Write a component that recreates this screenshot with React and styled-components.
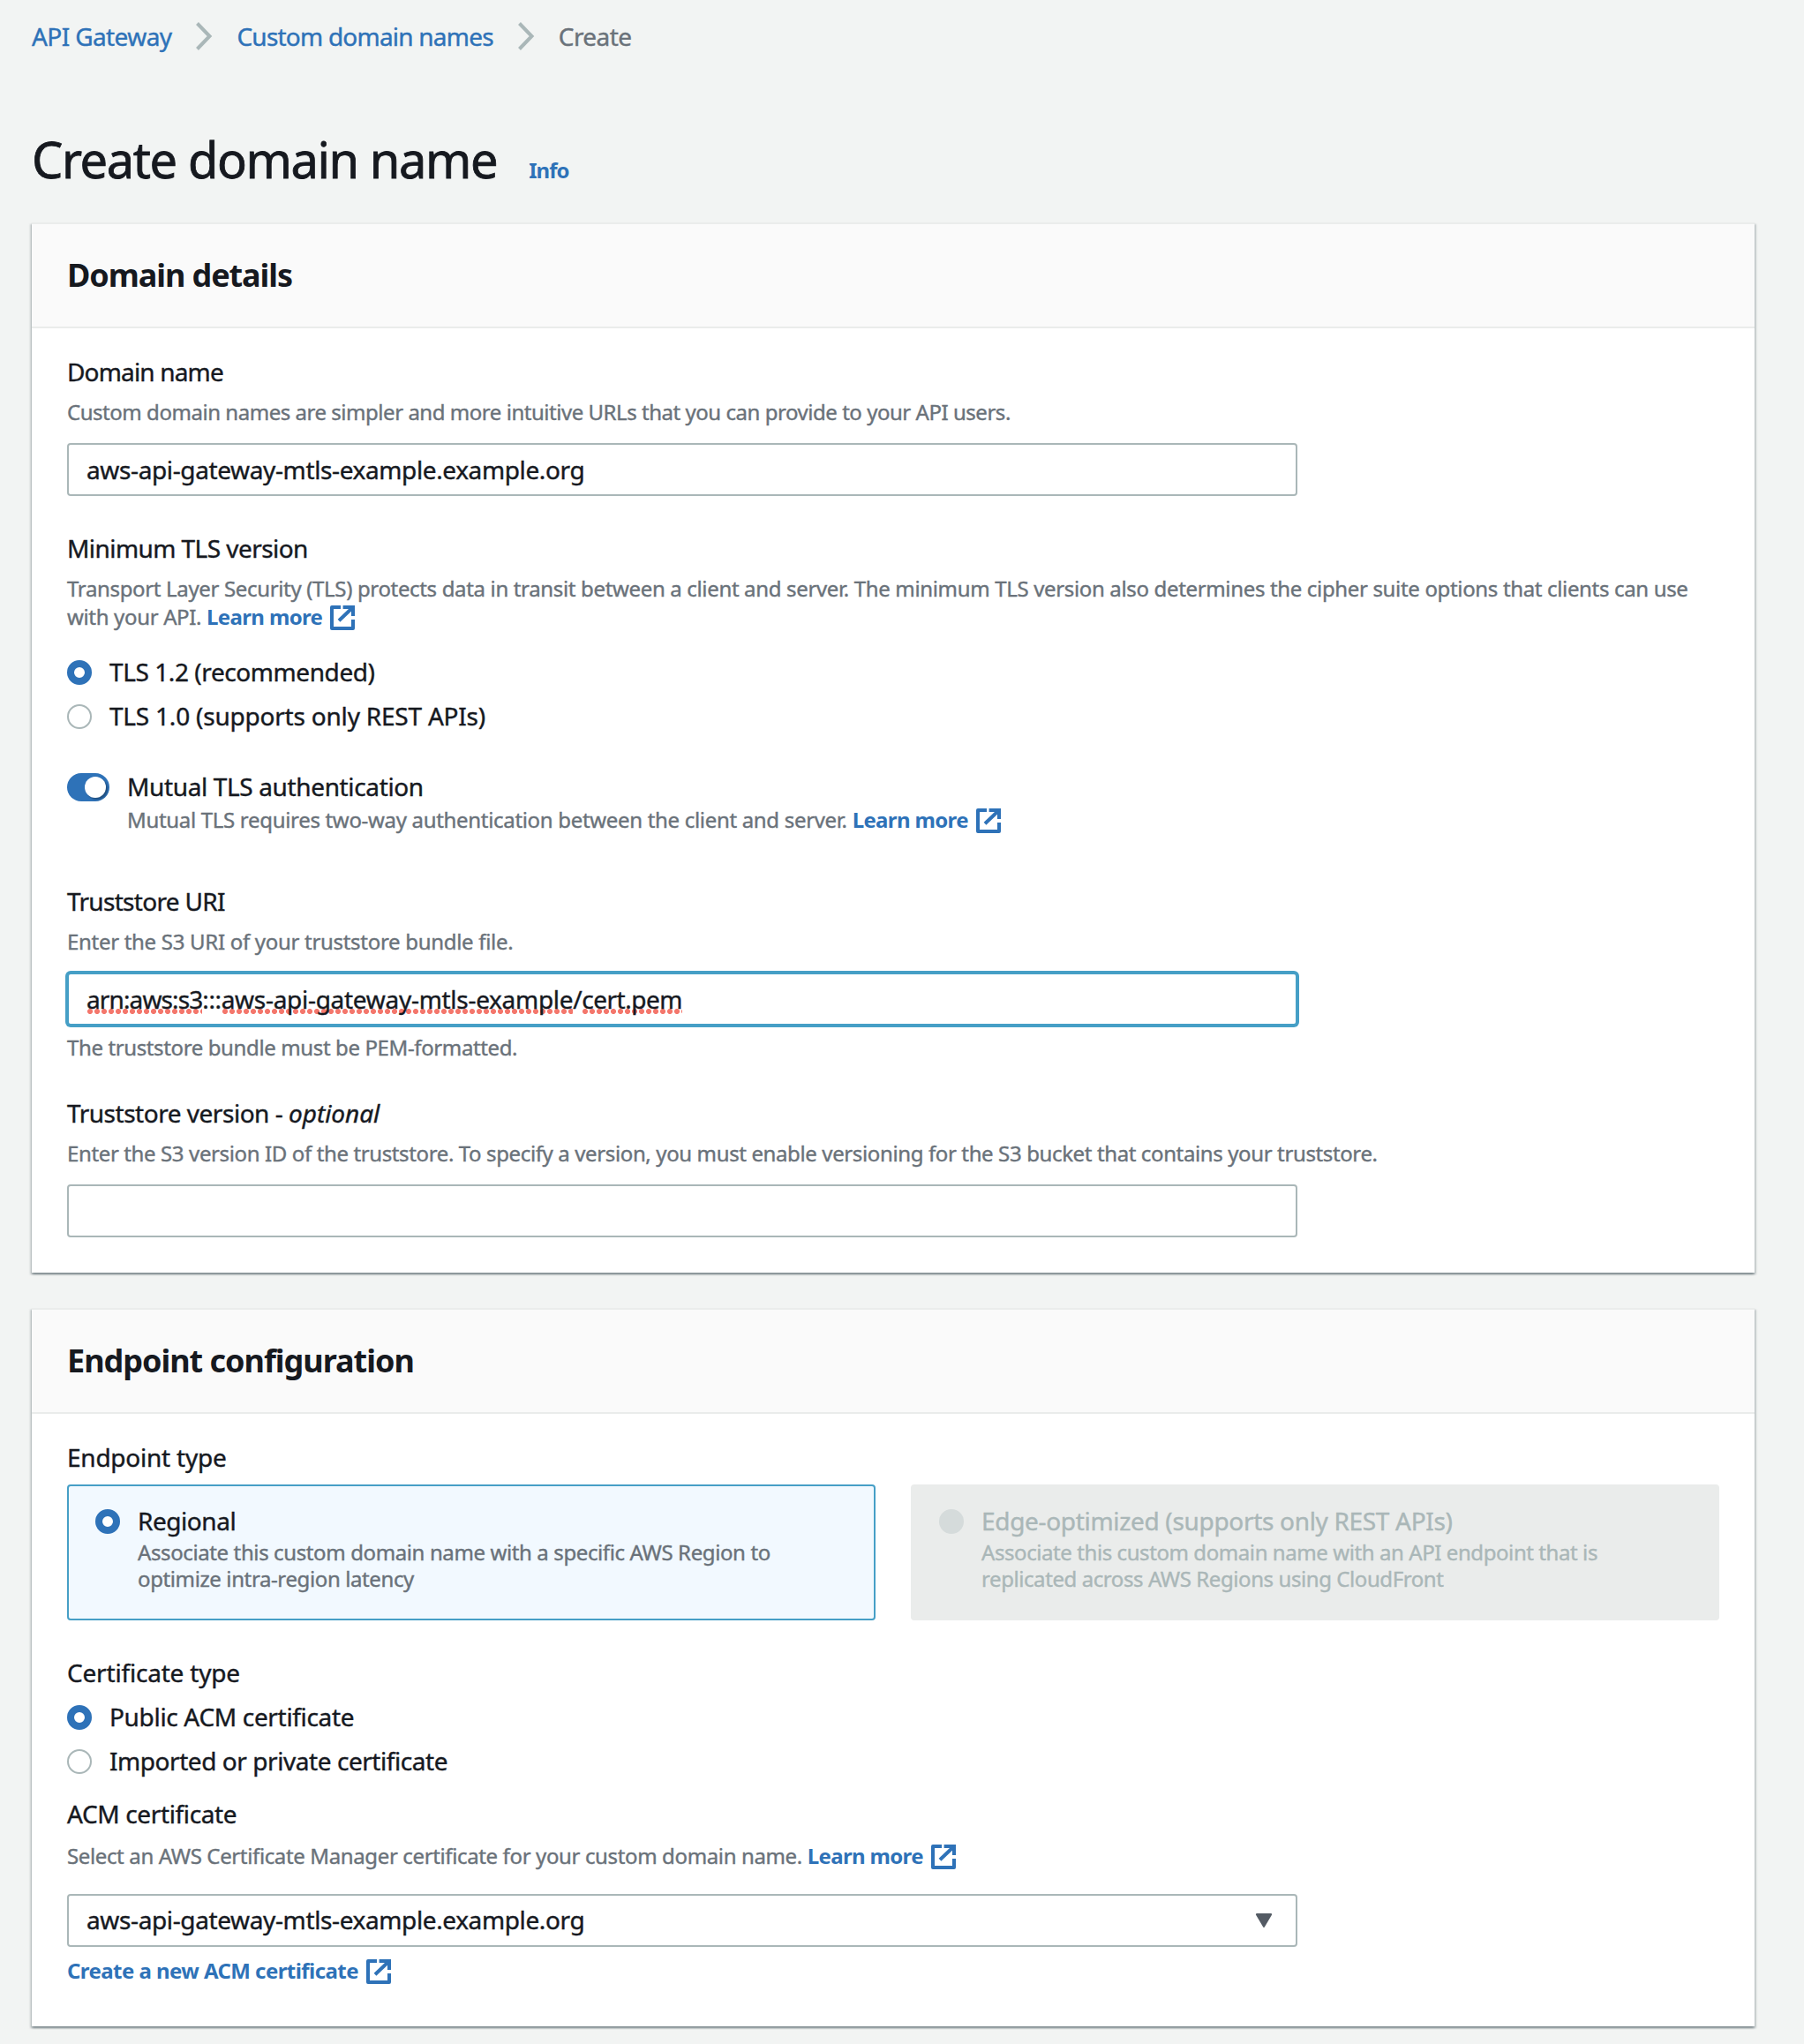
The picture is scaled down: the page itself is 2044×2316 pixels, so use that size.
import React from "react";
import styled, { createGlobalStyle, css } from "styled-components";

const color = {
  page: "#f2f4f3",
  text: "#16191f",
  muted: "#6a727a",
  link: "#2e72b8",
  border: "#aab7b8",
  focus: "#469fc6",
  divider: "#eaeceb",
  disabled: "#aab7b8",
};

const GlobalStyle = createGlobalStyle`
  *, *::before, *::after { box-sizing: border-box; }
  body {
    margin: 0;
    background: ${color.page};
    color: ${color.text};
    font-family: "Noto Sans", "Open Sans", sans-serif;
    font-size: 28px;
    font-weight: 400;
    -webkit-text-stroke: 0.4px currentColor;
  }
  h1, h2, p { margin: 0; }
`;

const tracking = css`
  letter-spacing: ${(p) => p.$track ?? 0}px;
`;

const Page = styled.main`
  min-height: 2316px;
  padding: 19px 56px 20px 36px;
`;

const Breadcrumbs = styled.nav`
  display: flex;
  align-items: center;
  gap: 27px;
  height: 44px;
  line-height: 44px;
`;

const Crumb = styled.span`
  color: ${(p) => (p.$current ? color.muted : color.link)};
  white-space: nowrap;
  ${tracking}
`;

const TitleRow = styled.header`
  display: flex;
  align-items: baseline;
  gap: 36px;
  margin: 79px 0 34px;
`;

const Title = styled.h1`
  font-size: 56px;
  font-weight: 400;
  line-height: 76px;
  white-space: nowrap;
  -webkit-text-stroke-width: 0.8px;
  ${tracking}
`;

const Link = styled.a`
  color: ${color.link};
  font-size: 24px;
  font-weight: 700;
  white-space: nowrap;
  -webkit-text-stroke-width: 0;
  ${tracking}
`;

const Card = styled.section`
  background: #fff;
  border-top: 2px solid ${color.divider};
  box-shadow: 0 2px 2px rgba(0, 28, 36, 0.3), 2px 2px 2px rgba(0, 28, 36, 0.15),
    -2px 2px 2px rgba(0, 28, 36, 0.15);
  & + & {
    margin-top: 40px;
  }
`;

const CardHeader = styled.div`
  height: 118px;
  padding: 33px 40px 0;
  background: #fafafa;
  border-bottom: 2px solid ${color.divider};
`;

const CardTitle = styled.h2`
  font-size: 36px;
  font-weight: 700;
  line-height: 49px;
  -webkit-text-stroke-width: 0;
  ${tracking}
`;

const CardBody = styled.div`
  padding: 27px 40px ${(p) => p.$bottom}px;
`;

const Field = styled.div`
  margin-top: ${(p) => p.$top ?? 0}px;
`;

const Label = styled.div`
  line-height: 44px;
  white-space: nowrap;
  ${tracking}
`;

const Optional = styled.em`
  ${tracking}
`;

const Description = styled.p`
  margin-top: ${(p) => p.$top ?? 8}px;
  color: ${color.muted};
  font-size: 24px;
  line-height: 32px;
  ${tracking}
`;

const Control = styled.div`
  display: flex;
  align-items: center;
  justify-content: space-between;
  width: 1394px;
  height: 60px;
  margin-top: ${(p) => p.$top ?? 19}px;
  padding: 0 26px 0 20px;
  background: #fff;
  border: 2px solid ${(p) => (p.$focused ? color.focus : color.border)};
  border-radius: 4px;
  box-shadow: ${(p) => (p.$focused ? `0 0 0 2px ${color.focus}` : "none")};
  line-height: 44px;
  white-space: nowrap;
`;

const Value = styled.span`
  ${tracking}
`;

const SelectedOption = styled.span`
  padding-bottom: 2px;
  ${tracking}
`;

const Misspelled = styled.span`
  background: radial-gradient(circle, #f4776c 2.7px, transparent 3.3px) 0 calc(100% - 2px) / 8px 6px
    repeat-x;
  ${tracking}
`;

const Options = styled.div`
  margin-top: ${(p) => p.$top}px;
`;

const Option = styled.label`
  display: flex;
  gap: 20px;
  height: 50px;
  line-height: 44px;
`;

const OptionText = styled.span`
  ${tracking}
`;

const Radio = styled.span`
  flex: none;
  width: 28px;
  height: 28px;
  margin-top: ${(p) => p.$top ?? 9}px;
  border-radius: 50%;
  background: #fff;
  border: ${(p) =>
    p.$state === "checked"
      ? `8px solid ${color.link}`
      : p.$state === "disabled"
      ? "14px solid #d5dbdb"
      : `2px solid ${color.border}`};
`;

const ToggleRow = styled.div`
  display: flex;
  gap: 20px;
  margin-top: 30px;
`;

const Toggle = styled.span`
  display: flex;
  flex: none;
  justify-content: flex-end;
  align-items: center;
  width: 48px;
  height: 32px;
  margin-top: 7px;
  padding-right: 4px;
  border-radius: 16px;
  background: ${color.link};
`;

const Knob = styled.span`
  width: 24px;
  height: 24px;
  border-radius: 50%;
  background: #fff;
  box-shadow: 2px 2px 2px rgba(0, 0, 0, 0.3);
`;

const Tiles = styled.div`
  display: grid;
  grid-template-columns: 1fr 1fr;
  gap: 40px;
  margin-top: 9px;
`;

const Tile = styled.div`
  display: flex;
  gap: 20px;
  height: 154px;
  padding: 18px 30px 0;
  border: 2px solid ${(p) => (p.$disabled ? color.divider : color.focus)};
  border-radius: 4px;
  background: ${(p) => (p.$disabled ? color.divider : "#f2f9ff")};
  color: ${(p) => (p.$disabled ? color.disabled : color.text)};
`;

const TileTitle = styled.div`
  line-height: 42px;
  ${tracking}
`;

const TileText = styled.p`
  color: ${(p) => (p.$disabled ? color.disabled : color.muted)};
  font-size: 24px;
  line-height: 30px;
  ${tracking}
`;

const Icon = styled.svg`
  flex: none;
  display: block;
`;

const InlineIcon = styled.svg`
  margin-left: 9px;
  vertical-align: -6px;
`;

function Chevron() {
  return (
    <Icon width="20" height="32" viewBox="0 0 20 32" fill="none" stroke={color.border} strokeWidth="4">
      <path d="M2.5 1.5 16.5 16 2.5 30.5" />
    </Icon>
  );
}

function ExternalIcon() {
  return (
    <InlineIcon width="28" height="28" viewBox="1 1 14 14" fill="none" stroke={color.link} strokeWidth="2">
      <path d="M14 9v5H2V2h5" strokeLinejoin="round" />
      <path d="M8.3 2H14v5" />
      <path d="M6 9.6 13.6 2.4" />
    </InlineIcon>
  );
}

function Caret() {
  return (
    <Icon width="20" height="16" viewBox="0 0 20 16">
      <path
        d="M2 1.2h16L10 14.8z"
        fill="#545b64"
        stroke="#545b64"
        strokeWidth="2.2"
        strokeLinejoin="round"
      />
    </Icon>
  );
}

function ExternalLink({ children, track }) {
  return (
    <Link>
      <Value $track={track}>{children}</Value>
      <ExternalIcon />
    </Link>
  );
}

function RadioOption({ checked, track, children }) {
  return (
    <Option>
      <Radio $state={checked ? "checked" : "empty"} />
      <OptionText $track={track}>{children}</OptionText>
    </Option>
  );
}

export default function App() {
  return (
    <>
      <GlobalStyle />
      <Page>
        <Breadcrumbs>
          <Crumb $track={-0.6}>API Gateway</Crumb>
          <Chevron />
          <Crumb $track={-0.78}>Custom domain names</Crumb>
          <Chevron />
          <Crumb $current $track={-0.57}>Create</Crumb>
        </Breadcrumbs>

        <TitleRow>
          <Title $track={-1.4}>Create domain name</Title>
          <Link $track={-1}>Info</Link>
        </TitleRow>

        <Card>
          <CardHeader>
            <CardTitle $track={-1.08}>Domain details</CardTitle>
          </CardHeader>
          <CardBody $bottom={40}>
            <Field>
              <Label $track={-0.83}>Domain name</Label>
              <Description $track={-0.465}>
                Custom domain names are simpler and more intuitive URLs that you can provide to your API users.
              </Description>
              <Control>
                <Value $track={-0.375}>aws-api-gateway-mtls-example.example.org</Value>
              </Control>
            </Field>

            <Field $top={37}>
              <Label $track={-0.56}>Minimum TLS version</Label>
              <Description $track={-0.341}>
                Transport Layer Security (TLS) protects data in transit between a client and server. The minimum TLS
                version also determines the cipher suite options that clients can use with your API.{" "}
                <ExternalLink track={-0.65}>Learn more</ExternalLink>
              </Description>
              <Options $top={24}>
                <RadioOption checked track={-0.42}>TLS 1.2 (recommended)</RadioOption>
                <RadioOption track={-0.21}>TLS 1.0 (supports only REST APIs)</RadioOption>
              </Options>
            </Field>

            <ToggleRow>
              <Toggle>
                <Knob />
              </Toggle>
              <div>
                <Label $track={-0.36}>Mutual TLS authentication</Label>
                <Description $top={0} $track={-0.315}>
                  Mutual TLS requires two-way authentication between the client and server.{" "}
                  <ExternalLink track={-0.65}>Learn more</ExternalLink>
                </Description>
              </div>
            </ToggleRow>

            <Field $top={54}>
              <Label $track={-0.7}>Truststore URI</Label>
              <Description $track={-0.3}>Enter the S3 URI of your truststore bundle file.</Description>
              <Control $focused>
                <Value $track={-0.391}>
                  <Misspelled $track={-0.88}>arn:aws:s3</Misspelled>:::
                  <Misspelled $track={-0.29}>aws-api-gateway-mtls-example</Misspelled>/
                  <Misspelled $track={-0.5}>cert.pem</Misspelled>
                </Value>
              </Control>
              <Description $top={9} $track={-0.378}>The truststore bundle must be PEM-formatted.</Description>
            </Field>

            <Field $top={36}>
              <Label $track={-0.48}>
                Truststore version - <Optional $track={-0.064}>optional</Optional>
              </Label>
              <Description $track={-0.375}>
                Enter the S3 version ID of the truststore. To specify a version, you must enable versioning for the S3
                bucket that contains your truststore.
              </Description>
              <Control />
            </Field>
          </CardBody>
        </Card>

        <Card>
          <CardHeader>
            <CardTitle $track={-1.02}>Endpoint configuration</CardTitle>
          </CardHeader>
          <CardBody $bottom={47}>
            <Field>
              <Label $track={-0.24}>Endpoint type</Label>
              <Tiles>
                <Tile>
                  <Radio $state="checked" $top={8} />
                  <div>
                    <TileTitle $track={-0.45}>Regional</TileTitle>
                    <TileText $track={-0.385}>
                      Associate this custom domain name with a specific AWS Region to optimize intra-region latency
                    </TileText>
                  </div>
                </Tile>
                <Tile $disabled>
                  <Radio $state="disabled" $top={8} />
                  <div>
                    <TileTitle $track={-0.32}>Edge-optimized (supports only REST APIs)</TileTitle>
                    <TileText $disabled $track={-0.42}>
                      Associate this custom domain name with an API endpoint that is replicated across AWS Regions
                      using CloudFront
                    </TileText>
                  </div>
                </Tile>
              </Tiles>
            </Field>

            <Field $top={37}>
              <Label $track={-0.19}>Certificate type</Label>
              <Options $top={6}>
                <RadioOption checked track={-0.323}>Public ACM certificate</RadioOption>
                <RadioOption track={-0.441}>Imported or private certificate</RadioOption>
              </Options>
            </Field>

            <Field $top={10}>
              <Label $track={-0.363}>ACM certificate</Label>
              <Description $top={10} $track={-0.368}>
                Select an AWS Certificate Manager certificate for your custom domain name.{" "}
                <ExternalLink track={-0.65}>Learn more</ExternalLink>
              </Description>
              <Control $top={27}>
                <SelectedOption $track={-0.375}>aws-api-gateway-mtls-example.example.org</SelectedOption>
                <Caret />
              </Control>
              <Description $top={11}>
                <ExternalLink track={-0.56}>Create a new ACM certificate</ExternalLink>
              </Description>
            </Field>
          </CardBody>
        </Card>
      </Page>
    </>
  );
}
